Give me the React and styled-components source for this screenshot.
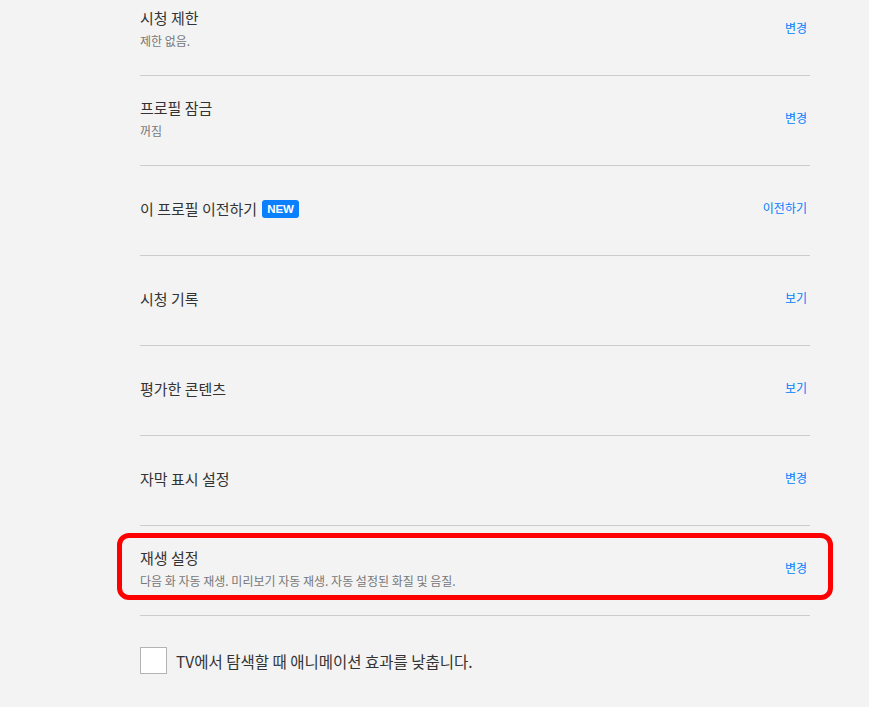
import styled, { createGlobalStyle } from "styled-components";

const GlobalStyle = createGlobalStyle`
  html, body {
    margin: 0;
    padding: 0;
    background: #f3f3f3;
    font-family: "Noto Sans CJK KR", "Noto Sans", sans-serif;
    overflow: hidden;
  }
`;

const settings = [
  { title: "시청 제한", sub: "제한 없음.", action: "변경" },
  { title: "프로필 잠금", sub: "꺼짐", action: "변경" },
  { title: "이 프로필 이전하기", badge: "NEW", action: "이전하기" },
  { title: "시청 기록", action: "보기" },
  { title: "평가한 콘텐츠", action: "보기" },
  { title: "자막 표시 설정", action: "변경" },
  {
    title: "재생 설정",
    sub: "다음 화 자동 재생. 미리보기 자동 재생. 자동 설정된 화질 및 음질.",
    action: "변경",
    highlight: true,
  },
];

export default function App() {
  return (
    <>
      <GlobalStyle />
      <Page>
        <List>
          {settings.map((el) => (
            <Row key={el.title}>
              {el.highlight && <Highlight />}
              <TextBlock>
                <Title>
                  {el.title}
                  {el.badge && <Badge>{el.badge}</Badge>}
                </Title>
                {el.sub && <Sub>{el.sub}</Sub>}
              </TextBlock>
              <Action href="#">{el.action}</Action>
            </Row>
          ))}
        </List>
        <CheckRow>
          <Box type="checkbox" />
          <CheckLabel>TV에서 탐색할 때 애니메이션 효과를 낮춥니다.</CheckLabel>
        </CheckRow>
      </Page>
    </>
  );
}

// STYLED COMPONENTS

const Page = styled.div`
  width: 670px;
  padding-left: 140px;
  margin-top: -14px;
`;

const List = styled.div`
  display: flex;
  flex-direction: column;
`;

const Row = styled.div`
  position: relative;
  height: 89px;
  box-sizing: content-box;
  border-bottom: 1px solid #cccccc;
  display: flex;
  align-items: center;
  justify-content: space-between;
  & > * {
    margin-bottom: 4px;
  }
`;

const Highlight = styled.div`
  position: absolute;
  left: -23px;
  right: -23px;
  top: 7px;
  bottom: 11px;
  border: 5px solid #ff0000;
  border-radius: 12px;
  pointer-events: none;
`;

const TextBlock = styled.div`
  display: flex;
  flex-direction: column;
  gap: 4px;
`;

const Title = styled.div`
  display: flex;
  align-items: center;
  font-size: 15px;
  line-height: 20px;
  color: #333333;
`;

const Badge = styled.span`
  margin-left: 5px;
  background: #0a80ff;
  color: #ffffff;
  font-family: "Liberation Sans", Arial, sans-serif;
  font-weight: 700;
  font-size: 11.5px;
  line-height: 18px;
  padding: 0 5px;
  border-radius: 3px;
`;

const Sub = styled.div`
  font-size: 12px;
  line-height: 18px;
  color: #777777;
`;

const Action = styled.a`
  font-size: 12px;
  color: #0080ff;
  text-decoration: none;
  margin-right: 3px;
  && {
    margin-bottom: 6px;
  }
`;

const CheckRow = styled.div`
  display: flex;
  align-items: center;
  gap: 9px;
  margin-top: 31px;
`;

const Box = styled.input`
  appearance: none;
  margin: 0;
  width: 27px;
  height: 27px;
  background: #ffffff;
  border: 1px solid #b3b3b3;
  box-sizing: border-box;
`;

const CheckLabel = styled.span`
  font-size: 15.5px;
  color: #333333;
`;
